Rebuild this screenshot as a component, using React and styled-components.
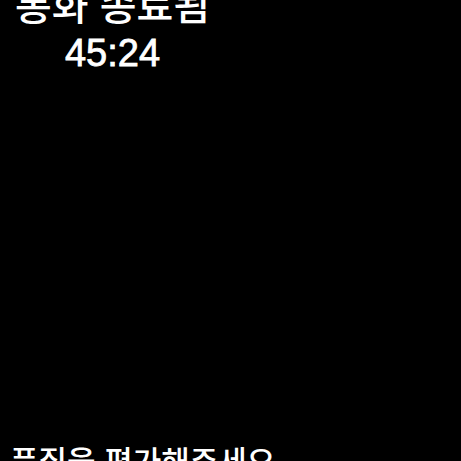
import React from 'react';
import styled, { createGlobalStyle } from 'styled-components';

const GlobalStyle = createGlobalStyle`
  html, body {
    margin: 0;
    padding: 0;
    background: #000;
  }
  body {
    font-family: "Liberation Sans", "Noto Sans CJK KR", sans-serif;
    color: #fff;
  }
`;

const Screen = styled.div`
  width: 461px;
  height: 461px;
  overflow: hidden;
  background: #000;
  display: flex;
  flex-direction: column;
  justify-content: space-between;
`;

const CallInfo = styled.div`
  width: 225px;
  margin-top: -18px;
  display: flex;
  flex-direction: column;
  align-items: center;
`;

const Title = styled.h1`
  margin: 0;
  font-size: 40px;
  font-weight: 500;
  line-height: 1.2;
`;

const Timer = styled.div`
  margin-top: 1px;
  font-size: 38px;
  font-weight: 500;
  line-height: 1.2;
  -webkit-text-stroke: 0.8px #fff;
`;

const Prompt = styled.h2`
  margin: 0 0 -22px 10px;
  font-size: 31px;
  font-weight: 500;
  line-height: 1.3;
`;

export default function App() {
  return (
    <>
      <GlobalStyle />
      <Screen>
        <CallInfo>
          <Title>통화 종료됨</Title>
          <Timer>45:24</Timer>
        </CallInfo>
        <Prompt>품질을 평가해주세요</Prompt>
      </Screen>
    </>
  );
}
